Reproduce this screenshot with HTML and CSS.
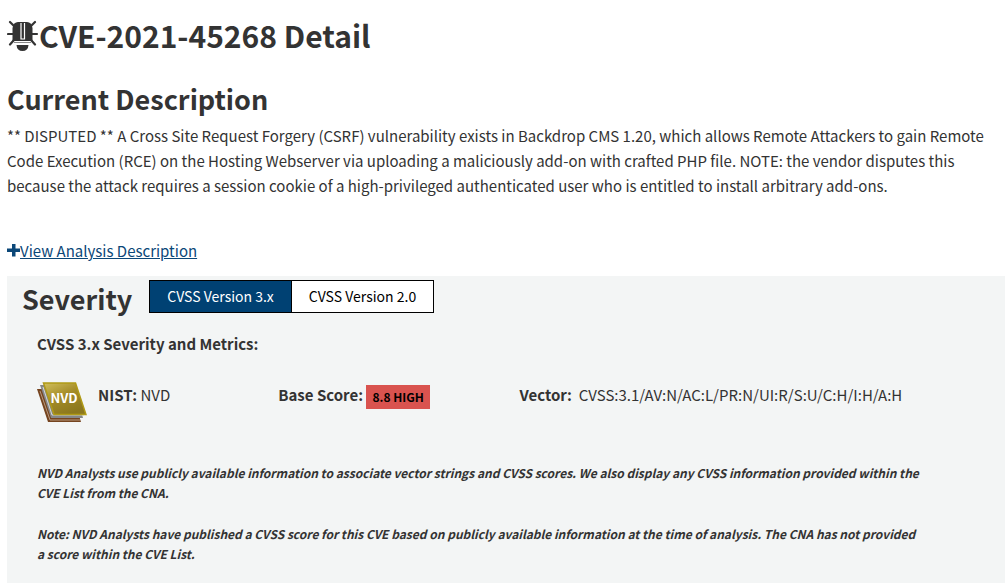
FILE: index.html
```html
<!DOCTYPE html>
<html lang="en">
<head>
<meta charset="utf-8">
<title>CVE-2021-45268 Detail</title>
<link rel="stylesheet" href="styles.css">
</head>
<body>
<main class="page">
  <h1 class="title">
    <svg class="bug" viewBox="0 0 32 32" aria-hidden="true">
      <path d="M5.500 9Q6.500 3 11 3H20Q24.500 3 25.500 9V22H5.500Z" fill="#333"/>
      <path d="M9.500 26H21.500Q21 32 15.500 32Q10 32 9.500 26Z" fill="#333"/>
      <path d="M7 7L3 3M24 7L28 3M6 15H1M25 15H30M7 21L3 25.500M24 21L28 25.500" stroke="#333" stroke-width="2.200" stroke-linecap="round" fill="none"/>
      <path d="M14 4V20H17.500V4" stroke="#fff" stroke-width="1.200" fill="none"/>
      <path d="M7 23.500H24" stroke="#888" stroke-width="1"/>
    </svg>
    <span>CVE-2021-45268 Detail</span>
  </h1>
  <h2 class="subtitle">Current Description</h2>
  <p class="description">** DISPUTED ** A Cross Site Request Forgery (CSRF) vulnerability exists in Backdrop CMS 1.20, which allows Remote Attackers to gain Remote Code Execution (RCE) on the Hosting Webserver via uploading a maliciously add-on with crafted PHP file. NOTE: the vendor disputes this because the attack requires a session cookie of a high-privileged authenticated user who is entitled to install arbitrary add-ons.</p>
  <a class="analysis" href="#analysis">
    <svg class="plus" viewBox="0 0 13 13" aria-hidden="true"><path d="M5 0H8.500V4.500H13V8H8.500V12.500H5V8H0V4.500H5Z" fill="#0b4778"/></svg>
    <span class="analysis-text">View Analysis Description</span>
  </a>
  <section class="severity">
    <header class="severity-head">
      <h2 class="severity-title">Severity</h2>
      <div class="versions">
        <button class="version active" type="button">CVSS Version 3.x</button>
        <button class="version" type="button">CVSS Version 2.0</button>
      </div>
    </header>
    <div class="severity-body">
      <h3 class="metrics-title">CVSS 3.x Severity and Metrics:</h3>
      <div class="metrics">
        <div class="source">
          <svg class="books" viewBox="0 0 50 41" role="img" aria-label="NVD">
            <defs><linearGradient id="gold" x1="0" y1="0" x2="0.6" y2="1"><stop offset="0" stop-color="#d1bf5b"/><stop offset="0.5" stop-color="#a38b27"/><stop offset="1" stop-color="#8b771e"/></linearGradient></defs>
            <path d="M0 7H34L44 40H11Z" fill="#75441f"/>
            <path d="M3 9L13 38H43" fill="none" stroke="#b89a80" stroke-width="1"/>
            <path d="M3 3H37L46 36H14Z" fill="#858789"/>
            <path d="M6 5L15 33H47" fill="none" stroke="#d8d8d8" stroke-width="1"/>
            <path d="M6.500 1H38.500L49 32.500H17Z" fill="url(#gold)" stroke="#b09a16" stroke-width="1.500"/>
            <text class="logo-text" x="27" y="21" text-anchor="middle">NVD</text>
          </svg>
          <p class="metric"><strong>NIST:</strong> NVD</p>
        </div>
        <p class="metric"><strong>Base Score:</strong> <a class="score" href="#score">8.8 HIGH</a></p>
        <p class="metric"><strong>Vector:</strong>&nbsp; CVSS:3.1/AV:N/AC:L/PR:N/UI:R/S:U/C:H/I:H/A:H</p>
      </div>
      <div class="notes">
        <p class="note">NVD Analysts use publicly available information to associate vector strings and CVSS scores. We also display any CVSS information provided within the CVE List from the CNA.</p>
        <p class="note">Note: NVD Analysts have published a CVSS score for this CVE based on publicly available information at the time of analysis. The CNA has not provided a score within the CVE List.</p>
      </div>
    </div>
  </section>
</main>
</body>
</html>
```
FILE: styles.css
```css
* { box-sizing: border-box; }
body {
  margin: 0;
  background: #fff;
  color: #333;
  font-family: "Source Sans Pro", "Noto Sans CJK SC", sans-serif;
  font-size: 15px;
  line-height: 25px;
}
h1, h2, h3, p { margin: 0; }
.page { padding: 16px 1px 0 7px; }
.title, .subtitle, .severity-title {
  font-size: 27px;
  line-height: 38px;
  font-weight: 700;
}
.title { display: flex; align-items: center; font-size: 30px; }
.bug { width: 32px; height: 32px; }
.subtitle { margin-top: 26px; }
.description { margin-top: 5px; }
.analysis {
  display: flex;
  align-items: center;
  width: fit-content;
  margin-top: 40px;
  color: #0b4778;
  text-decoration: none;
}
.plus { width: 13px; height: 13px; }
.analysis-text { text-decoration: underline; }
.severity {
  margin-top: 13px;
  padding: 4px 3px 20px 15px;
  background: #f3f5f5;
}
.severity-head { display: flex; align-items: flex-start; gap: 17px; }
.versions { display: flex; }
.version {
  height: 33px;
  padding: 0 17px 2px;
  border: 1px solid #000;
  background: #fff;
  color: #000;
  font-family: inherit;
  font-size: 14px;
}
.version.active { border-right: 0; background: #004173; color: #fff; }
.severity-body { padding-left: 15px; }
.metrics-title { margin-top: 13px; font-size: 15px; line-height: 25px; }
.metrics {
  display: grid;
  grid-template-columns: 1fr 1fr 2fr;
  margin-top: 26px;
}
.source { display: flex; gap: 11px; }
.books { width: 50px; height: 41px; }
.logo-text { fill: #fff; font-size: 13px; font-weight: 700; }
.metric { line-height: 26px; }
.score {
  display: inline-block;
  padding: 0 6px;
  background: #d9534f;
  color: #000;
  font-size: 12px;
  font-weight: 700;
  line-height: 24px;
  text-decoration: none;
  vertical-align: middle;
}
.notes { padding: 40px 80px 0 0; }
.note {
  margin-bottom: 21px;
  font-size: 12px;
  font-style: italic;
  font-weight: 700;
  line-height: 20px;
}
```
